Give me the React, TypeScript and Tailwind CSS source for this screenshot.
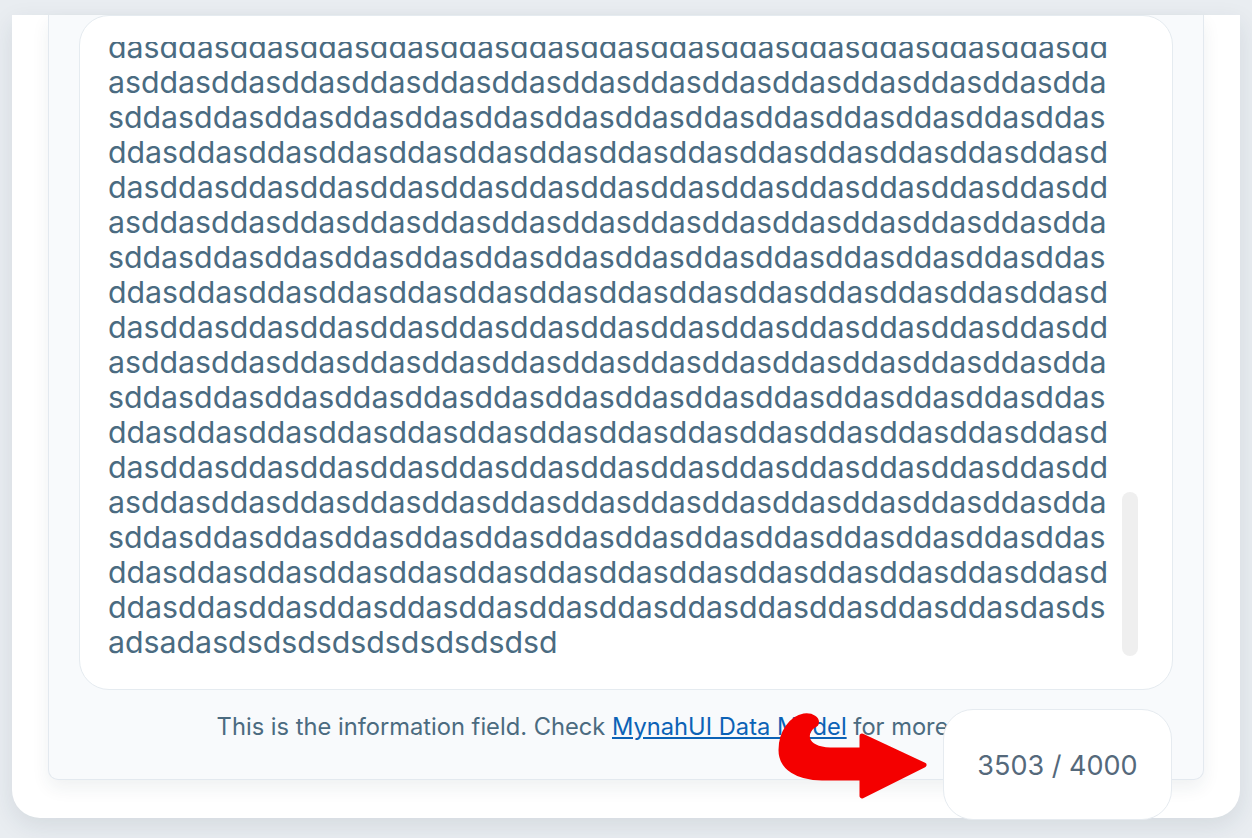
const CYCLE = 'dasd';

function buildLines(): string[] {
  const lines: string[] = [];
  for (let i = 0; i < 16; i++) {
    let s = '';
    for (let k = 0; k < 57; k++) s += CYCLE[(i + k) % 4];
    lines.push(s);
  }
  lines.push('ddas'.repeat(13) + 'dasds');
  lines.push('adsadasdsdsdsdsdsdsdsdsdsd');
  return lines;
}

function CurvedArrow() {
  return (
    <svg width="165" height="95" viewBox="0 0 165 95" className="absolute left-[770px] top-[710px]">
      <path
        d="M92 40 L92 26 L154 55 L92 86 L92 68 L52 68 C28 68 11 58 11 40 C11 22 22 8 34 6 C42 5 48 9 46 14 C34 20 31 38 60 40 Z"
        fill="#f40000"
        stroke="#f40000"
        strokeWidth="5"
        strokeLinejoin="round"
      />
    </svg>
  );
}

export default function App() {
  const lines = buildLines();

  return (
    <div
      className="relative w-[1252px] h-[838px] overflow-hidden bg-[#e9edf1] flex flex-col justify-end px-[12px] pb-[20px]"
      style={{ fontFamily: 'Inter, "Noto Sans", sans-serif' }}
    >
      <div className="bg-white rounded-b-[28px] shadow-[0_8px_24px_rgba(30,50,70,0.10)] px-[36px] pb-[38px]">
        <div className="bg-[#f8fafc] border border-t-0 border-[#e3e9ef] rounded-b-[10px] px-[30px] shadow-[0_8px_18px_rgba(30,50,70,0.07)]">
          <div className="relative h-[675px] bg-white border border-[#e5ebf0] rounded-[30px] pl-[28px] pr-[50px] pt-[26px] pb-[29px] flex flex-col">
            <div className="flex-1 overflow-hidden flex flex-col justify-end">
              {lines.map((l, i) => (
                <div key={i} className="whitespace-nowrap text-[30.3px] leading-[35px] text-[#4a6b81]">
                  {l}
                </div>
              ))}
            </div>
            <div className="absolute right-[34px] top-[476px] w-[16px] h-[164px] rounded-full bg-[#efefef]" />
          </div>
          <div className="h-[89px] pt-[23px] text-center text-[23.7px] leading-[28px] whitespace-nowrap text-[#4b6b80]">
            This is the information field. Check{' '}
            <a href="#" className="text-[#0b62b6] underline underline-offset-2">MynahUI Data Model</a>{' '}
            for more details.
          </div>
        </div>
      </div>

      <div className="absolute right-[80px] bottom-[18px] w-[229px] h-[111px] bg-white border border-[#e6ebf0] rounded-[30px] flex items-center justify-center pt-[3px]">
        <span className="text-[27px] text-[#55697b]">3503 / 4000</span>
      </div>

      <CurvedArrow />
    </div>
  );
}
